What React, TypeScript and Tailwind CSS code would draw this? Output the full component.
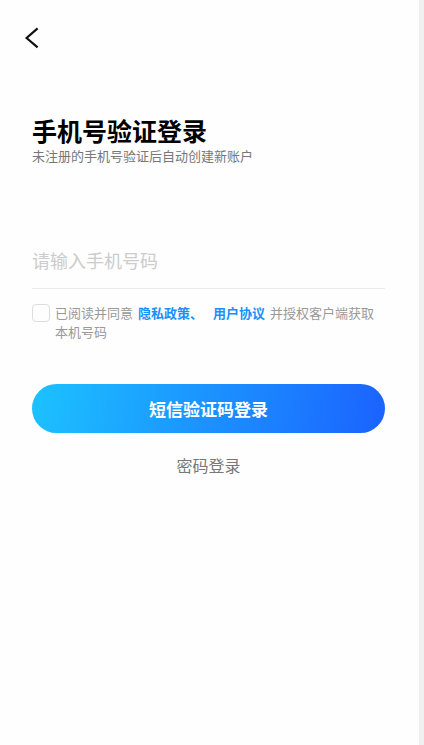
import React, { useState } from "react"

function App() {
  const [phone, setPhone] = useState("")
  const [agreed, setAgreed] = useState(false)

  return (
    <div className="min-h-screen border-r-5 border-[#f0f0f0] bg-[#fefefe] font-['Noto_Sans_CJK_SC',sans-serif] text-[#777]">
      <header className="px-6 pt-6">
        <button type="button" aria-label="返回" className="block text-[#111]">
          <svg viewBox="0 0 16 28" fill="none" stroke="currentColor" strokeWidth={2.2} className="h-7 w-4">
            <path d="M13.6 4.4L2.6 14L13.6 23.4" />
          </svg>
        </button>
      </header>

      <main className="pt-16 pr-[34px] pl-8">
        <h1 className="text-[25px] font-bold leading-7 text-black">手机号验证登录</h1>
        <p className="text-[13px] leading-6">未注册的手机号验证后自动创建新账户</p>

        <form className="mt-16" onSubmit={(e) => e.preventDefault()}>
          <input
            type="tel"
            aria-label="手机号码"
            placeholder="请输入手机号码"
            value={phone}
            onChange={(e) => setPhone(e.target.value)}
            className="block h-[57px] w-full border-b border-[#ebebeb] text-lg text-black outline-none placeholder:text-[#ccc]"
          />

          <div className="mt-[14px] flex items-start gap-[5px]">
            <input
              id="agree"
              type="checkbox"
              checked={agreed}
              onChange={(e) => setAgreed(e.target.checked)}
              className="mt-px h-[18px] w-[18px] shrink-0 appearance-none rounded-sm border border-[#ddd] checked:bg-[#1890ff]"
            />
            <p className="text-[13px] leading-[19px] text-[#999]">
              <label htmlFor="agree">已阅读并同意</label>
              <a href="#privacy" className="mx-[5px] font-bold text-[#1890ff]">隐私政策、</a>
              <a href="#agreement" className="mx-[5px] font-bold text-[#1890ff]">用户协议</a>
              并授权客户端获取
              <span className="inline-block">本机号码</span>
            </p>
          </div>

          <button type="submit" className="mt-[43px] block h-[49px] w-full rounded-full bg-[linear-gradient(100deg,#1cc2ff,#1b62ff)] text-[17px] font-bold text-white">
            短信验证码登录
          </button>
          <a href="#password" className="mx-auto mt-5 block w-fit text-base leading-6">密码登录</a>
        </form>
      </main>
    </div>
  )
}

export default App
